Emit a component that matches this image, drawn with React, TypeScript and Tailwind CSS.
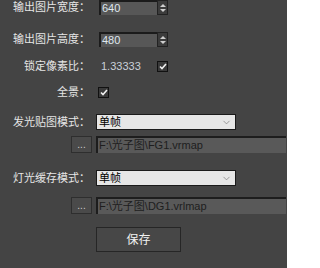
import { ChevronDown } from 'lucide-react';

const font = { fontFamily: '"Liberation Sans", "Noto Sans CJK SC", sans-serif' };

function Label({ text }: { text: string }) {
  return <div className="w-[90px] shrink-0 text-right text-[11px] leading-none text-[#e6e6e6]">{text}</div>;
}

function SpinInput({ value }: { value: string }) {
  return (
    <div className="ml-[9px] flex h-[15px]">
      <div className="flex w-[58px] items-center border-l-2 border-t-2 border-[#1b1b1b] bg-[#575757] pl-[1px] text-[11px] text-[#dfe6ee]">
        {value}
      </div>
      <div className="flex w-[11px] flex-col items-center justify-center gap-[2px] border border-[#222] bg-[#3c3c3c]">
        <span className="h-0 w-0 border-x-[3px] border-b-[3px] border-x-transparent border-b-[#cfcfcf]" />
        <span className="h-0 w-0 border-x-[3px] border-t-[3px] border-x-transparent border-t-[#cfcfcf]" />
      </div>
    </div>
  );
}

function Check() {
  return (
    <div className="flex h-[11px] w-[11px] items-center justify-center border border-[#111] bg-[#3a3a3a]">
      <svg width="8" height="7" viewBox="0 0 8 7">
        <path d="M1 3.5 L3 5.5 L7 1" stroke="#f0f0f0" strokeWidth="1.6" fill="none" />
      </svg>
    </div>
  );
}

function Select({ value }: { value: string }) {
  return (
    <div className="ml-[6px] flex h-[16px] w-[140px] items-center justify-between border border-[#1a1a1a] bg-[#e6e6e6] pl-[2px] pr-[3px] text-[11px] text-black">
      <span>{value}</span>
      <ChevronDown size={11} strokeWidth={1.5} color="#777" />
    </div>
  );
}

function PathRow({ path }: { path: string }) {
  return (
    <div className="flex h-[17px] items-stretch">
      <div className="ml-[71px] flex w-[21px] items-center justify-center border border-[#2e2e2e] bg-[#4a4a4a] text-[10px] leading-none text-[#cfcfcf]">
        ...
      </div>
      <div className="ml-[4px] flex w-[190px] items-center border-l-2 border-t-2 border-[#1d1d1d] bg-[#595959] pl-[1px] text-[11px] text-[#1e1e1e]">
        {path}
      </div>
    </div>
  );
}

export default function App() {
  return (
    <div className="h-[268px] w-[287px] overflow-hidden bg-[#444444]" style={font}>
      <div className="flex h-[15px] items-center">
        <Label text="输出图片宽度：" />
        <SpinInput value="640" />
      </div>
      <div className="mt-[17px] flex h-[15px] items-center">
        <Label text="输出图片高度：" />
        <SpinInput value="480" />
      </div>
      <div className="mt-[14px] flex h-[11px] items-center">
        <Label text="锁定像素比：" />
        <span className="ml-[11px] w-[56px] text-[11px] text-[#c9d0d8]">1.33333</span>
        <Check />
      </div>
      <div className="mt-[15px] flex h-[11px] items-center">
        <Label text="全景：" />
        <div className="ml-[8px]">
          <Check />
        </div>
      </div>
      <div className="mt-[16px] flex h-[16px] items-center">
        <Label text="发光贴图模式：" />
        <Select value="单帧" />
      </div>
      <div className="mt-[6px]">
        <PathRow path="F:\光子图\FG1.vrmap" />
      </div>
      <div className="mt-[17px] flex h-[16px] items-center">
        <Label text="灯光缓存模式：" />
        <Select value="单帧" />
      </div>
      <div className="mt-[11px]">
        <PathRow path="F:\光子图\DG1.vrlmap" />
      </div>
      <div className="mt-[13px] flex">
        <button
          type="button"
          className="ml-[96px] h-[25px] w-[85px] border border-[#262626] bg-[#474747] text-[12px] text-[#f2f2f2]"
        >
          保存
        </button>
      </div>
    </div>
  );
}
